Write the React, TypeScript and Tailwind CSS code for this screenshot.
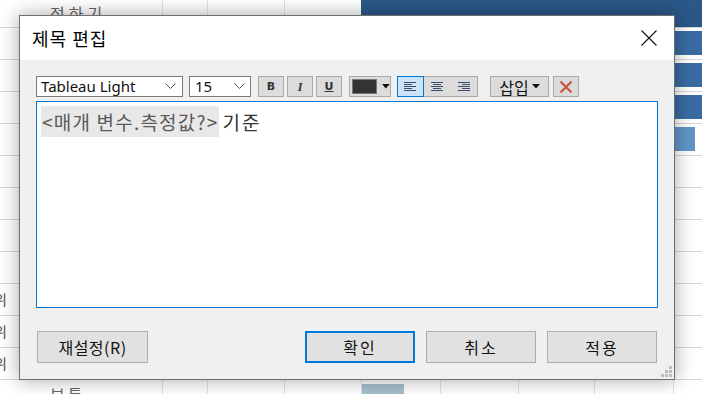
import React from "react";

const KR = { fontFamily: '"Noto Sans CJK KR", "Noto Sans", sans-serif' };

function BgRow({ h, bar, left, edge }: { h: number; bar?: React.ReactNode; left?: React.ReactNode; edge?: boolean }) {
  return (
    <div className="flex shrink-0 border-b border-[#d6d6d6]" style={{ height: h }}>
      <div className="w-[162px] shrink-0 flex items-center relative">
        {edge ? (
          <div className="w-[7px] overflow-hidden flex justify-end text-[15px] text-[#555] leading-none">
            <span className="shrink-0">위</span>
          </div>
        ) : null}
        {left}
      </div>
      <div className="w-[45px] shrink-0 border-l border-[#e2e2e2]" />
      <div className="w-[77px] shrink-0 border-l border-[#e2e2e2]" />
      <div className="w-[77px] shrink-0 border-l border-[#e2e2e2]" />
      <div className="flex-1 flex flex-col">{bar}</div>
    </div>
  );
}

function Chevron() {
  return (
    <svg width="11" height="7" viewBox="0 0 11 7" className="shrink-0">
      <path d="M0.5 0.5 L5.5 5.5 L10.5 0.5" fill="none" stroke="#555" strokeWidth="1" />
    </svg>
  );
}

function AlignIcon({ kind }: { kind: "l" | "c" | "r" }) {
  const rows = kind === "l"
    ? [[0, 12], [0, 8], [0, 12], [0, 8], [0, 12]]
    : kind === "c"
    ? [[0, 12], [2, 10], [0, 12], [2, 10], [0, 12]]
    : [[0, 12], [4, 12], [0, 12], [4, 12], [0, 12]];
  return (
    <svg width="12" height="9" viewBox="0 0 12 9">
      {rows.map((r, i) => (
        <rect key={i} x={r[0]} y={i * 2} width={r[1] - r[0]} height="1" fill="#3c4c6c" />
      ))}
    </svg>
  );
}

export default function App() {
  const barDark = "bg-gradient-to-r from-[#29578a] to-[#3a6ca3]";
  return (
    <div className="relative w-[702px] h-[394px] overflow-hidden bg-white" style={KR}>
      {/* background sheet */}
      <div className="flex flex-col">
        <BgRow
          h={28}
          left={<span className="absolute left-[50px] top-[1px] text-[16px] tracking-[4px] text-[#666]">정하기</span>}
          bar={<div className="h-[27px] bg-[#2a5889]" />}
        />
        <BgRow h={32} bar={<div className={"mt-[3px] h-[24px] " + barDark} />} />
        <BgRow h={32} bar={<div className={"mt-[3px] h-[24px] " + barDark} />} />
        <BgRow h={32} bar={<div className={"mt-[3px] h-[24px] " + barDark} />} />
        <BgRow h={32} bar={<div className="mt-[3px] h-[24px] w-[334px] bg-gradient-to-r from-[#4f83b8] to-[#6096c6]" />} />
        <BgRow h={32} />
        <BgRow h={32} />
        <BgRow h={32} />
        <BgRow h={32} />
        <BgRow h={32} edge />
        <BgRow h={32} edge />
        <BgRow h={32} edge />
        <div className="flex shrink-0 h-[40px]">
          <div className="w-[162px] shrink-0 relative">
            <span className="absolute left-[50px] top-[2px] text-[16px] tracking-[3px] text-[#666]">보통</span>
          </div>
          <div className="w-[45px] shrink-0 border-l border-[#e2e2e2]" />
          <div className="w-[77px] shrink-0 border-l border-[#e2e2e2]" />
          <div className="w-[77px] shrink-0 border-l border-[#e2e2e2]" />
          <div className="w-[79px] shrink-0 border-l border-[#e2e2e2]">
            <div className="mt-[4px] h-[30px] w-[42px] bg-[#a6bfcd]" />
          </div>
          <div className="w-[78px] shrink-0 border-l border-[#e2e2e2]" />
          <div className="w-[76px] shrink-0 border-l border-[#e2e2e2]" />
          <div className="w-[79px] shrink-0 border-l border-[#e2e2e2]" />
          <div className="flex-1 border-l border-[#e2e2e2]" />
        </div>
      </div>

      {/* dialog */}
      <div className="absolute left-[19px] top-[15px] w-[656px] h-[365px] border border-[#6f6f6f] bg-[#f0f0f0] flex flex-col shadow-[0_0_18px_rgba(0,0,0,0.35)]">
        <div className="h-[44px] shrink-0 bg-white flex items-center justify-between pl-[12px] pr-[17px]">
          <span className="text-[18px] text-black tracking-[1px] leading-none">제목 편집</span>
          <svg width="16" height="16" viewBox="0 0 16 16">
            <path d="M0.5 0.5 L15.5 15.5 M15.5 0.5 L0.5 15.5" stroke="#111" strokeWidth="1.1" />
          </svg>
        </div>
        <div className="flex-1 flex flex-col px-[16px] pt-[16px] relative">
          {/* toolbar */}
          <div className="flex items-center h-[21px]">
            <div className="w-[147px] h-[21px] bg-white border border-[#7a7a7a] flex items-center justify-between pl-[4px] pr-[6px]">
              <span className="text-[15px] text-[#111] leading-none" style={{ fontFamily: '"Noto Sans", sans-serif' }}>Tableau Light</span>
              <Chevron />
            </div>
            <div className="ml-[6px] w-[62px] h-[21px] bg-white border border-[#7a7a7a] flex items-center justify-between pl-[5px] pr-[5px]">
              <span className="text-[15px] text-[#111] leading-none" style={{ fontFamily: '"Noto Sans", sans-serif' }}>15</span>
              <Chevron />
            </div>
            <div className="ml-[7px] w-[26px] h-[21px] bg-[#dcdcdc] border border-[#aaaaaa] flex items-center justify-center">
              <span className="text-[11px] font-bold text-[#333] leading-none" style={{ fontFamily: '"DejaVu Sans", sans-serif' }}>B</span>
            </div>
            <div className="ml-[3px] w-[26px] h-[21px] bg-[#dcdcdc] border border-[#aaaaaa] flex items-center justify-center">
              <span className="text-[12px] font-bold italic text-[#333] leading-none" style={{ fontFamily: '"Liberation Serif", serif' }}>I</span>
            </div>
            <div className="ml-[3px] w-[26px] h-[21px] bg-[#dcdcdc] border border-[#aaaaaa] flex items-center justify-center">
              <span className="text-[11px] font-bold underline text-[#333] leading-none" style={{ fontFamily: '"DejaVu Sans", sans-serif' }}>U</span>
            </div>
            <div className="ml-[7px] w-[42px] h-[21px] bg-[#dcdcdc] border border-[#aaaaaa] flex items-center pl-[2px]">
              <div className="w-[26px] h-[15px] bg-[#333333] border border-[#777]" />
              <svg width="8" height="5" viewBox="0 0 8 5" className="ml-[5px]">
                <path d="M0 0 H8 L4 4.5 Z" fill="#111" />
              </svg>
            </div>
            <div className="ml-[6px] w-[81px] h-[21px] bg-[#dcdcdc] border border-[#aaaaaa] flex">
              <div className="w-[27px] -my-px -ml-px h-[21px] bg-[#cce4f7] border border-[#0078d7] flex items-center justify-center">
                <AlignIcon kind="l" />
              </div>
              <div className="w-[27px] flex items-center justify-center">
                <AlignIcon kind="c" />
              </div>
              <div className="w-[27px] flex items-center justify-center">
                <AlignIcon kind="r" />
              </div>
            </div>
            <div className="ml-[12px] w-[59px] h-[21px] bg-[#dcdcdc] border border-[#aaaaaa] flex items-center justify-center gap-[3px]">
              <span className="text-[16px] text-[#111] leading-none">삽입</span>
              <svg width="8" height="5" viewBox="0 0 8 5">
                <path d="M0 0 H8 L4 4.5 Z" fill="#111" />
              </svg>
            </div>
            <div className="ml-[4px] w-[26px] h-[21px] bg-[#dcdcdc] border border-[#aaaaaa] flex items-center justify-center">
              <svg width="14" height="14" viewBox="0 0 14 14">
                <path d="M1.5 1.5 L12.5 12.5 M12.5 1.5 L1.5 12.5" stroke="#c4573d" strokeWidth="2.2" />
              </svg>
            </div>
          </div>

          {/* text area */}
          <div className="mt-[4px] h-[207px] bg-white border border-[#0078d7] pt-[4px] pl-[4px]">
            <div className="flex items-center h-[31px]">
              <span className="h-[31px] flex items-center bg-[#e8e8e8] pl-[1px] pr-[1px] text-[19px] tracking-[1.2px] text-[#5a5a5a] leading-none">
                &lt;매개 변수.측정값?&gt;
              </span>
              <span className="ml-[3px] text-[19px] text-[#333] leading-none tracking-[2px]">기준</span>
            </div>
          </div>

          {/* buttons */}
          <div className="mt-[23px] flex items-center">
            <div className="ml-[1px] w-[111px] h-[32px] bg-[#e1e1e1] border border-[#adadad] flex items-center justify-center text-[16px] text-[#111] tracking-[0.5px]">
              재설정(R)
            </div>
            <div className="ml-auto w-[110px] h-[32px] bg-[#e1e1e1] border-2 border-[#0078d7] flex items-center justify-center text-[16px] text-[#111] tracking-[2px]">
              확인
            </div>
            <div className="ml-[11px] w-[110px] h-[32px] bg-[#e1e1e1] border border-[#adadad] flex items-center justify-center text-[16px] text-[#111] tracking-[2px]">
              취소
            </div>
            <div className="ml-[11px] mr-[1px] w-[110px] h-[32px] bg-[#e1e1e1] border border-[#adadad] flex items-center justify-center text-[16px] text-[#111] tracking-[2px]">
              적용
            </div>
          </div>

          {/* resize grip */}
          <svg width="11" height="11" viewBox="0 0 11 11" className="absolute right-[2px] bottom-[2px]">
            {[[8, 0], [4, 4], [8, 4], [0, 8], [4, 8], [8, 8]].map((p, i) => (
              <rect key={i} x={p[0]} y={p[1]} width="3" height="3" fill="#bdbdbd" />
            ))}
          </svg>
        </div>
      </div>
    </div>
  );
}
